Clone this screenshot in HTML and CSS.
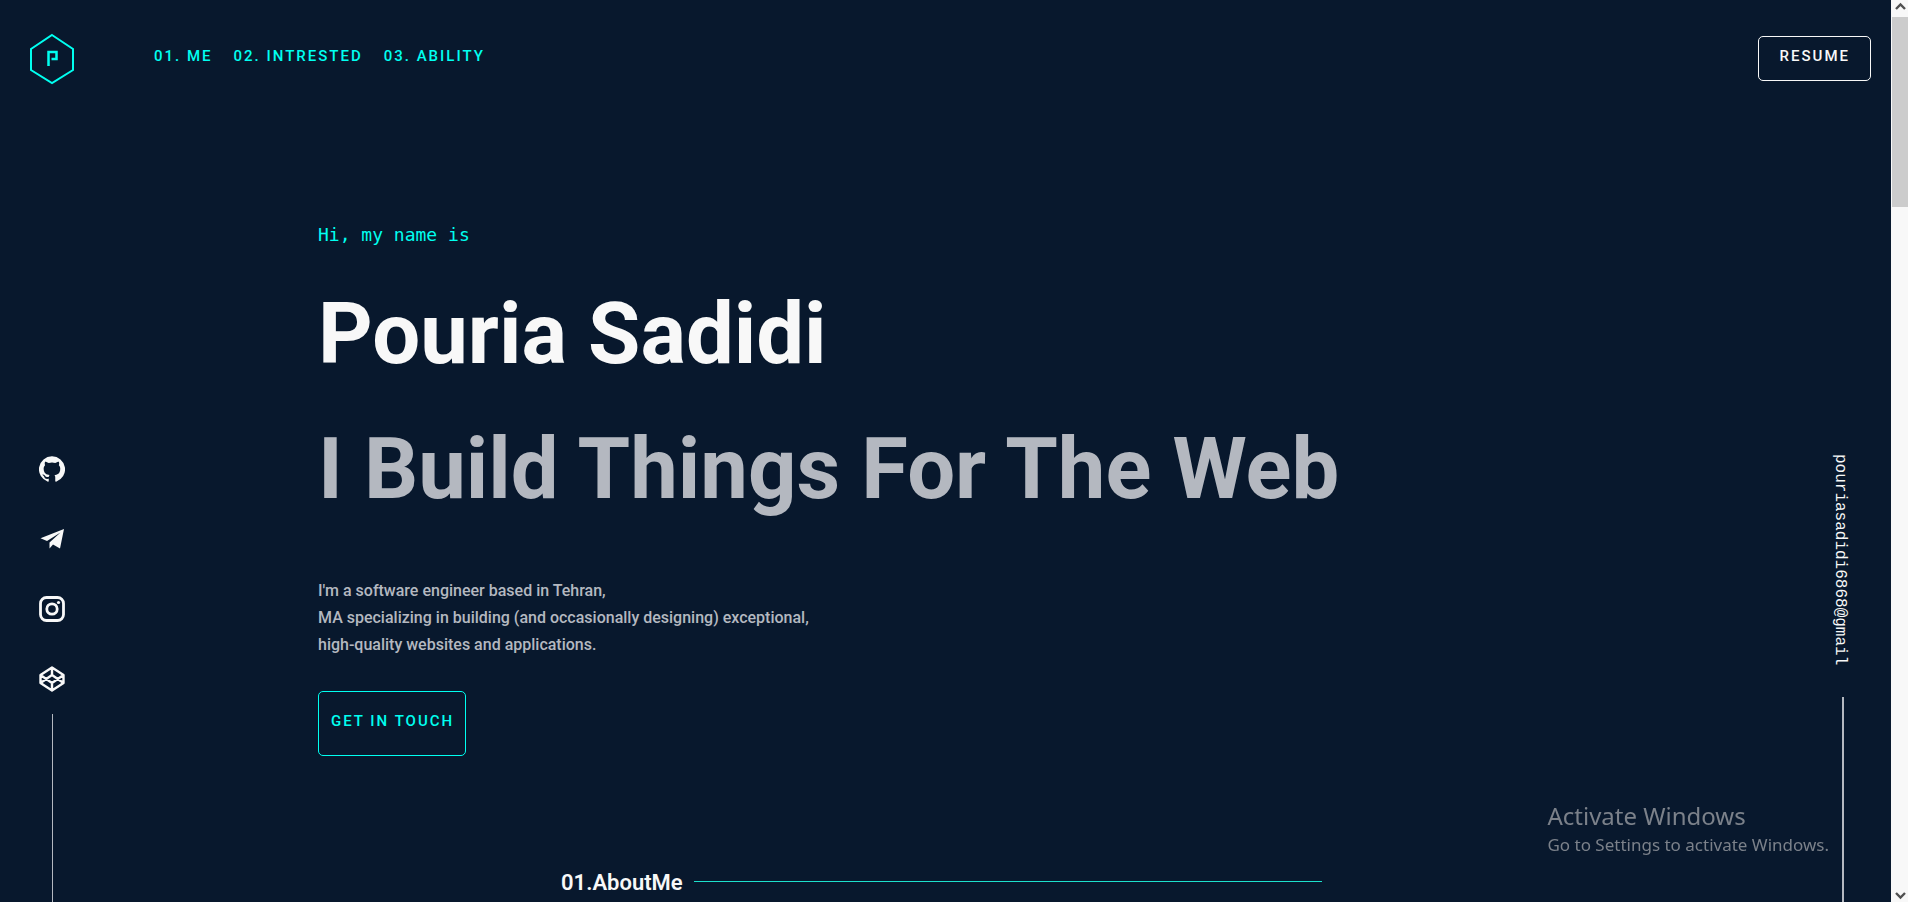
FILE: index.html
```html
<!DOCTYPE html>
<html lang="en">
<head>
<meta charset="utf-8">
<title>Pouria Sadidi</title>
<link rel="stylesheet" href="styles.css">
</head>
<body>
<div class="page">
  <header class="header">
    <a class="logo" href="#" aria-label="Home">
      <svg width="46" height="52" viewBox="0 0 46 52" fill="none" stroke="currentColor" stroke-width="2">
        <path d="M23 2 44 16V37L23 50 2 37V16Z"/>
        <path d="M19.500 33V19H27.500V26H22.500" stroke-width="2.500"/>
      </svg>
    </a>
    <nav class="nav">
      <a href="#me">01. ME</a>
      <a href="#intrested">02. INTRESTED</a>
      <a href="#ability">03. ABILITY</a>
    </nav>
    <button class="btn btn-resume" type="button">RESUME</button>
  </header>

  <aside class="rail rail-left">
    <a href="#" aria-label="GitHub"><svg width="26" height="26" viewBox="0 0 24 24" fill="currentColor"><path d="M12 .3a12 12 0 0 0-3.800 23.400c.6.1.8-.3.8-.6v-2c-3.300.7-4-1.600-4-1.600-.6-1.400-1.400-1.800-1.400-1.800-1-.7.1-.7.1-.7 1.200 0 1.900 1.200 1.900 1.200 1 1.800 2.800 1.300 3.500 1 0-.8.400-1.300.7-1.600-2.700-.3-5.500-1.300-5.500-6 0-1.200.5-2.300 1.300-3.100-.2-.4-.6-1.600 0-3.200 0 0 1-.3 3.400 1.200a11.500 11.500 0 0 1 6 0c2.300-1.500 3.300-1.200 3.300-1.200.6 1.600.2 2.800 0 3.200.9.8 1.300 1.900 1.300 3.200 0 4.600-2.800 5.600-5.500 5.900.5.400.9 1 .9 2.200v3.300c0 .3.1.7.8.6A12 12 0 0 0 12 .3"/></svg></a>
    <a href="#" aria-label="Telegram"><svg width="26" height="26" viewBox="0 0 26 26" fill="currentColor"><path d="M25 3 1.500 12.200 8 15 21.500 6.500 10.500 16.500V22.500L14 18.500 21 22.500Z"/></svg></a>
    <a href="#" aria-label="Instagram"><svg width="26" height="26" viewBox="0 0 26 26" fill="none" stroke="currentColor" stroke-width="2.800"><rect x="1.500" y="1.500" width="23" height="23" rx="6"/><circle cx="13" cy="13" r="5.200"/><circle cx="19.500" cy="6.500" r="1.600" fill="currentColor" stroke="none"/></svg></a>
    <a href="#" aria-label="CodePen"><svg width="26" height="26" viewBox="0 0 26 26" fill="none" stroke="currentColor" stroke-width="2.400" stroke-linejoin="round"><path d="M13 1.500 24.500 9V17L13 24.500 1.500 17V9ZM1.500 9 13 17 24.500 9M1.500 17 13 9 24.500 17M13 1.500V9M13 17V24.500"/></svg></a>
    <span class="rail-line"></span>
  </aside>

  <main class="main">
    <section class="hero">
      <p class="hello">Hi, my name is</p>
      <h1 class="title">Pouria Sadidi</h1>
      <h2 class="title title-muted">I Build Things For The Web</h2>
      <p class="bio">I'm a software engineer based in Tehran,<br>MA specializing in building (and occasionally designing) exceptional,<br>high-quality websites and applications.</p>
      <button class="btn btn-touch" type="button">GET IN TOUCH</button>
    </section>
    <section class="about" id="me">
      <h2 class="about-title">01.AboutMe</h2>
      <span class="about-line"></span>
    </section>
  </main>

  <aside class="rail rail-right">
    <a class="email" href="#">pouriasadidi6868@gmail</a>
    <span class="rail-line"></span>
  </aside>
</div>

<div class="scrollbar" aria-hidden="true">
  <svg class="arrow" width="17" height="17" viewBox="0 0 17 17" fill="none" stroke="currentColor" stroke-width="2.400"><path d="M5 9 9.500 4.500 14 9"/></svg>
  <div class="track"><div class="thumb"></div></div>
  <svg class="arrow" width="17" height="17" viewBox="0 0 17 17" fill="none" stroke="currentColor" stroke-width="2.400"><path d="M5 8 9.500 12.500 14 8"/></svg>
</div>

<div class="watermark">
  <p class="watermark-title">Activate Windows</p>
  <p class="watermark-text">Go to Settings to activate Windows.</p>
</div>
</body>
</html>
```
FILE: styles.css
```css
* { box-sizing: border-box; }

:root {
  --navy: #08182d;
  --cyan: #00fff0;
  --white: #f8f8f8;
  --muted: #b4b8c0;
}

body {
  margin: 0;
  height: 100vh;
  overflow: hidden;
  display: grid;
  grid-template-columns: 1fr 17px;
  background: var(--navy);
  color: var(--white);
  font-family: Roboto, "Liberation Sans", sans-serif;
}

h1, h2, p { margin: 0; }
a { color: inherit; text-decoration: none; }
svg { display: block; }

.page {
  display: grid;
  grid-template-columns: 104px 1fr 96px;
  grid-template-rows: auto 1fr;
  height: 100vh;
  overflow: hidden;
}

.header {
  grid-column: 1 / -1;
  display: flex;
  align-items: flex-start;
  padding: 33px 20px 0 29px;
  height: 118px;
}

.logo { color: var(--cyan); }

.nav {
  display: flex;
  gap: 21px;
  margin-left: 79px;
  padding-top: 13px;
  color: var(--cyan);
  font: 500 15px/20px Roboto, "Liberation Sans", sans-serif;
  letter-spacing: 2px;
}

.btn {
  background: none;
  border: 1px solid currentColor;
  border-radius: 5px;
  font: 500 15px/20px Roboto, "Liberation Sans", sans-serif;
  letter-spacing: 2px;
}

.btn-resume {
  margin: 3px 0 0 auto;
  padding: 9px 20px 14px 21px;
  color: var(--white);
}

.rail {
  display: flex;
  flex-direction: column;
  align-items: center;
}

.rail-left {
  gap: 44px;
  padding-top: 338px;
}

.rail-left .rail-line { width: 1px; margin-top: -22px; }

.rail-right { padding-top: 336px; }
.rail-right .rail-line { width: 2px; margin-top: 32px; }

.rail-line {
  flex: 1;
  background: var(--muted);
}

.email {
  margin-right: 6px;
  writing-mode: vertical-rl;
  font: 16px/20px "Liberation Mono", "DejaVu Sans Mono", monospace;
}

.main { padding: 104px 0 0 214px; }

.hello {
  color: var(--cyan);
  font: 18px/26px "DejaVu Sans Mono", "Liberation Mono", monospace;
}

.title {
  margin-top: 37px;
  font-size: 85px;
  font-weight: 700;
  line-height: 98px;
  white-space: nowrap;
}

.title-muted { color: var(--muted); }

.bio {
  margin-top: 59px;
  color: var(--muted);
  font-size: 16px;
  font-weight: 500;
  line-height: 27px;
}

.btn-touch {
  margin-top: 33px;
  padding: 19px 11px 24px 12px;
  color: var(--cyan);
}

.about {
  display: flex;
  align-items: center;
  gap: 11px;
  width: 761px;
  margin: 110px 0 0 243px;
}

.about-title {
  padding-top: 3px;
  font-size: 22px;
  font-weight: 600;
  line-height: 28px;
}

.about-line {
  flex: 1;
  height: 1px;
  background: #1ce0cc;
}

.scrollbar {
  display: flex;
  flex-direction: column;
  background: #f8f8f8;
  color: #505050;
}

.track { flex: 1; padding-left: 1px; }
.thumb { height: 190px; background: #cccccc; }

.watermark {
  position: fixed;
  right: 79px;
  bottom: 44px;
  color: #7b818a;
  font-family: "Noto Sans", "Open Sans", sans-serif;
}

.watermark-title { font-size: 24px; line-height: 32px; }
.watermark-text { font-size: 17px; line-height: 26px; }
```
